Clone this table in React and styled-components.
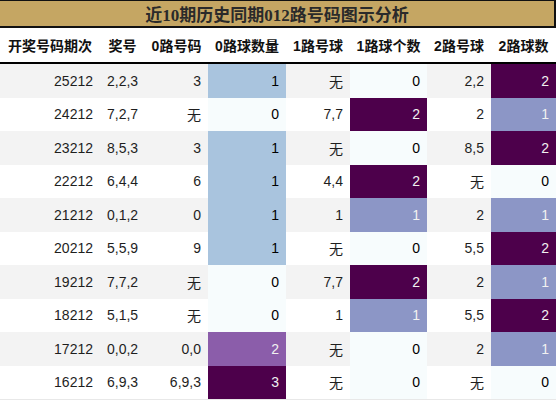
import React from "react";
import styled, { createGlobalStyle } from "styled-components";

const Global = createGlobalStyle`
  html, body { margin: 0; padding: 0; background: #fff; }
  body { font-family: "Liberation Sans", "Noto Sans CJK SC", sans-serif; }
`;

const Wrap = styled.div`
  width: 556px;
  display: flex;
  flex-direction: column;
`;

const Title = styled.div`
  height: 25px;
  box-sizing: content-box;
  border-top: 1px solid #111;
  border-bottom: 2px solid #111;
  border-right: 2px solid #111;
  background: #c5a663;
  color: #2a2a2a;
  font-family: "Liberation Serif", "Noto Sans CJK SC", serif;
  font-weight: bold;
  font-size: 17px;
  display: flex;
  align-items: center;
  justify-content: center;
`;

const COLS = "100px 45px 63px 78px 64px 77px 64px 65px";

const HeadRow = styled.div`
  display: grid;
  grid-template-columns: ${COLS};
  height: 34px;
  border-bottom: 2px solid #000;
  background: #fff;
`;

const HeadCell = styled.div`
  display: flex;
  align-items: center;
  justify-content: center;
  font-weight: bold;
  font-size: 14px;
  color: #111;
  white-space: nowrap;
`;

const Row = styled.div`
  display: grid;
  grid-template-columns: ${COLS};
  height: 33.5px;
  background: ${(p) => (p.$alt ? "#f3f3f3" : "#ffffff")};
`;

const Cell = styled.div`
  display: flex;
  align-items: center;
  justify-content: ${(p) => (p.$left ? "flex-start" : "flex-end")};
  padding: 0 7px;
  font-size: 14px;
  color: ${(p) => p.$fg || "#1e1e1e"};
  background: ${(p) => p.$bg || "transparent"};
  white-space: nowrap;
`;

const BottomLine = styled.div`
  height: 1px;
  background: #e8e8e8;
`;

const headers = ["开奖号码期次", "奖号", "0路号码", "0路球数量", "1路号球", "1路球个数", "2路号球", "2路球数"];

const rows = [
  ["25212", "2,2,3", "3", 1, "无", 0, "2,2", 2],
  ["24212", "7,2,7", "无", 0, "7,7", 2, "2", 1],
  ["23212", "8,5,3", "3", 1, "无", 0, "8,5", 2],
  ["22212", "6,4,4", "6", 1, "4,4", 2, "无", 0],
  ["21212", "0,1,2", "0", 1, "1", 1, "2", 1],
  ["20212", "5,5,9", "9", 1, "无", 0, "5,5", 2],
  ["19212", "7,7,2", "无", 0, "7,7", 2, "2", 1],
  ["18212", "5,1,5", "无", 0, "1", 1, "5,5", 2],
  ["17212", "0,0,2", "0,0", 2, "无", 0, "2", 1],
  ["16212", "6,9,3", "6,9,3", 3, "无", 0, "无", 0],
];

const zeroScale = {
  0: ["#f7fcfd", "#000"],
  1: ["#a9c4de", "#000"],
  2: ["#8b5daa", "#f1f1f1"],
  3: ["#4d004b", "#f1f1f1"],
};
const twoScale = {
  0: ["#f7fcfd", "#000"],
  1: ["#8c96c6", "#f1f1f1"],
  2: ["#4d004b", "#f1f1f1"],
};

function Count({ v, scale }) {
  const [bg, fg] = scale[v];
  return (
    <Cell $bg={bg} $fg={fg}>
      {v}
    </Cell>
  );
}

export default function App() {
  return (
    <>
      <Global />
      <Wrap>
        <Title>近10期历史同期012路号码图示分析</Title>
        <HeadRow>
          {headers.map((h) => (
            <HeadCell key={h}>{h}</HeadCell>
          ))}
        </HeadRow>
        {rows.map((r, i) => (
          <Row key={r[0]} $alt={i % 2 === 0}>
            <Cell>{r[0]}</Cell>
            <Cell $left>{r[1]}</Cell>
            <Cell>{r[2]}</Cell>
            <Count v={r[3]} scale={zeroScale} />
            <Cell>{r[4]}</Cell>
            <Count v={r[5]} scale={twoScale} />
            <Cell>{r[6]}</Cell>
            <Count v={r[7]} scale={twoScale} />
          </Row>
        ))}
        <BottomLine />
      </Wrap>
    </>
  );
}
